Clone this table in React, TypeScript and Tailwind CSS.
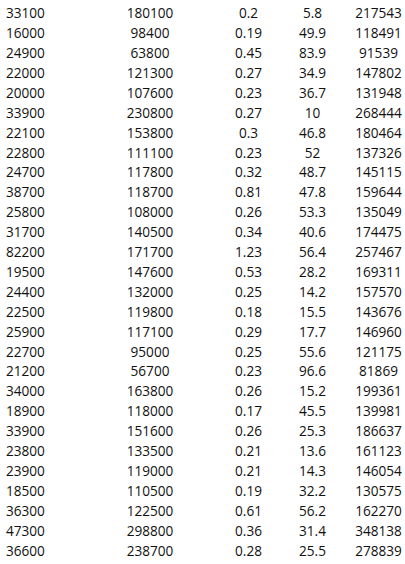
import React from "react";

const rows: [string, string, string, string, string][] = [
  ["33100", "180100", "0.2", "5.8", "217543"],
  ["16000", "98400", "0.19", "49.9", "118491"],
  ["24900", "63800", "0.45", "83.9", "91539"],
  ["22000", "121300", "0.27", "34.9", "147802"],
  ["20000", "107600", "0.23", "36.7", "131948"],
  ["33900", "230800", "0.27", "10", "268444"],
  ["22100", "153800", "0.3", "46.8", "180464"],
  ["22800", "111100", "0.23", "52", "137326"],
  ["24700", "117800", "0.32", "48.7", "145115"],
  ["38700", "118700", "0.81", "47.8", "159644"],
  ["25800", "108000", "0.26", "53.3", "135049"],
  ["31700", "140500", "0.34", "40.6", "174475"],
  ["82200", "171700", "1.23", "56.4", "257467"],
  ["19500", "147600", "0.53", "28.2", "169311"],
  ["24400", "132000", "0.25", "14.2", "157570"],
  ["22500", "119800", "0.18", "15.5", "143676"],
  ["25900", "117100", "0.29", "17.7", "146960"],
  ["22700", "95000", "0.25", "55.6", "121175"],
  ["21200", "56700", "0.23", "96.6", "81869"],
  ["34000", "163800", "0.26", "15.2", "199361"],
  ["18900", "118000", "0.17", "45.5", "139981"],
  ["33900", "151600", "0.26", "25.3", "186637"],
  ["23800", "133500", "0.21", "13.6", "161123"],
  ["23900", "119000", "0.21", "14.3", "146054"],
  ["18500", "110500", "0.19", "32.2", "130575"],
  ["36300", "122500", "0.61", "56.2", "162270"],
  ["47300", "298800", "0.36", "31.4", "348138"],
  ["36600", "238700", "0.28", "25.5", "278839"],
];

export default function App() {
  return (
    <div className="w-[405px] h-[564px] bg-white overflow-hidden pt-[3px] pl-[6px] font-['Open_Sans',sans-serif] text-[13.6px] text-[#111]">
      {rows.map((r, i) => (
        <div key={i} className="grid grid-cols-[70px_148px_49px_79px_53px] h-[19.92px] items-center leading-none">
          <span className="text-left">{r[0]}</span>
          <span className="text-center">{r[1]}</span>
          <span className="text-center">{r[2]}</span>
          <span className="text-center">{r[3]}</span>
          <span className="text-center">{r[4]}</span>
        </div>
      ))}
    </div>
  );
}
